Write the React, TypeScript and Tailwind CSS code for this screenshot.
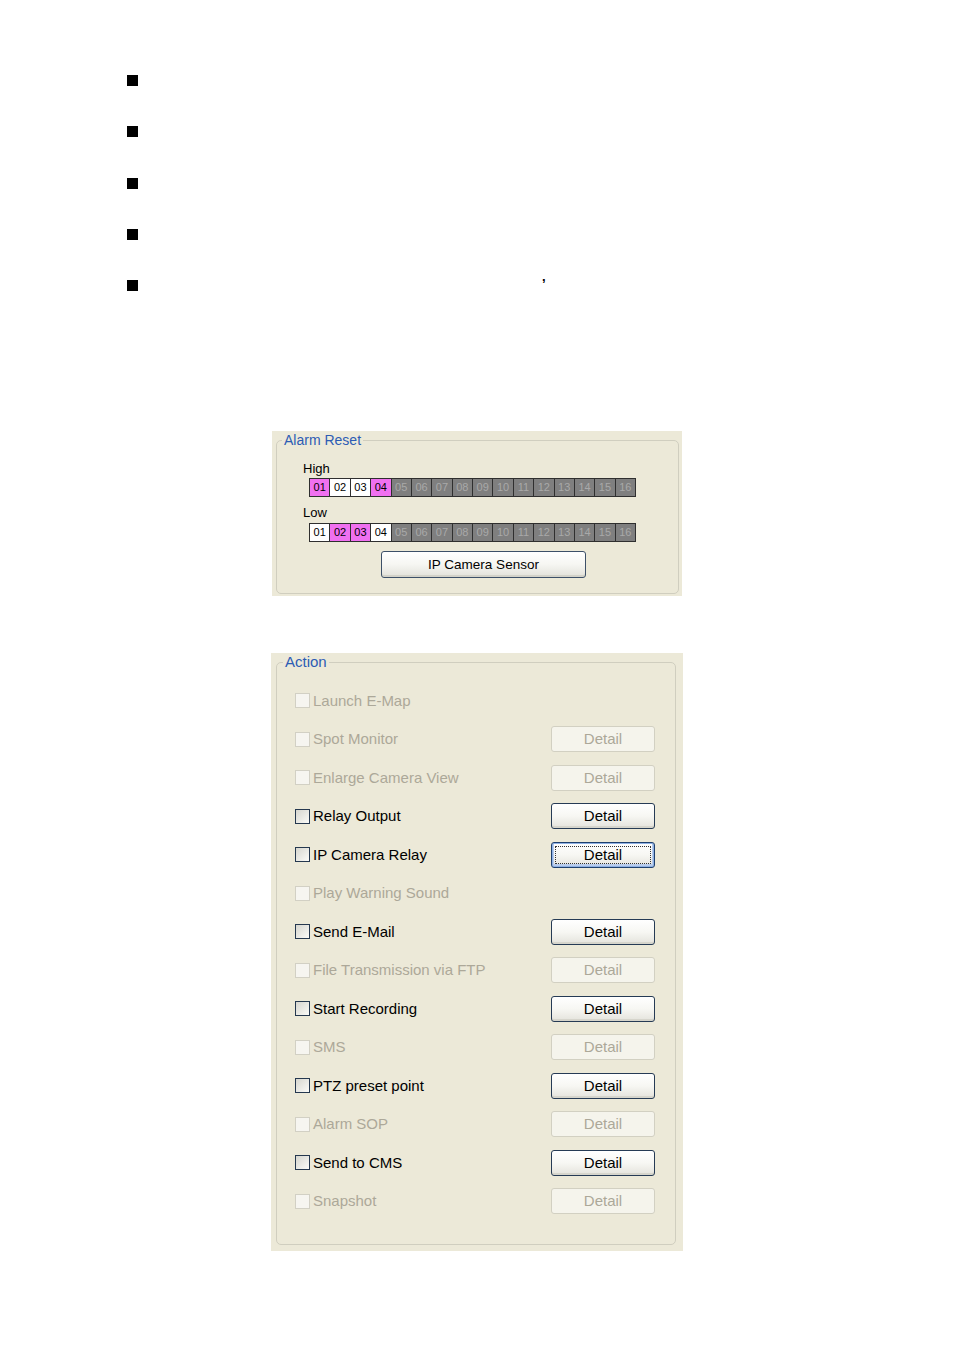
import React from 'react';

type CellState = 'on' | 'off' | 'na';

const highRow: CellState[] = ['on', 'off', 'off', 'on', ...Array(12).fill('na')];
const lowRow: CellState[] = ['off', 'on', 'on', 'off', ...Array(12).fill('na')];

interface ActionItem {
  label: string;
  enabled: boolean;
  detail: boolean;
  focused?: boolean;
}

const actions: ActionItem[] = [
  { label: 'Launch E-Map', enabled: false, detail: false },
  { label: 'Spot Monitor', enabled: false, detail: true },
  { label: 'Enlarge Camera View', enabled: false, detail: true },
  { label: 'Relay Output', enabled: true, detail: true },
  { label: 'IP Camera Relay', enabled: true, detail: true, focused: true },
  { label: 'Play Warning Sound', enabled: false, detail: false },
  { label: 'Send E-Mail', enabled: true, detail: true },
  { label: 'File Transmission via FTP', enabled: false, detail: true },
  { label: 'Start Recording', enabled: true, detail: true },
  { label: 'SMS', enabled: false, detail: true },
  { label: 'PTZ preset point', enabled: true, detail: true },
  { label: 'Alarm SOP', enabled: false, detail: true },
  { label: 'Send to CMS', enabled: true, detail: true },
  { label: 'Snapshot', enabled: false, detail: true },
];

const CellRow: React.FC<{ cells: CellState[] }> = ({ cells }) => (
  <div className="grid grid-cols-16 gap-px bg-[#2f2f2f] p-px w-[327px] h-[19px]">
    {cells.map((state, idx) => {
      const tone =
        state === 'on'
          ? 'bg-[#f070f0] text-black'
          : state === 'off'
          ? 'bg-white text-black'
          : 'bg-[#7f7f7f] text-[#a9a9a9]';
      return (
        <div key={idx} className={`${tone} flex items-center justify-center text-[11px] leading-none`}>
          {String(idx + 1).padStart(2, '0')}
        </div>
      );
    })}
  </div>
);

const Checkbox: React.FC<{ enabled: boolean }> = ({ enabled }) => (
  <span
    className={`w-[15px] h-[15px] shrink-0 border ${
      enabled
        ? 'border-[#25384f] bg-linear-to-br from-[#d6d6cf] to-[#fbfbf8]'
        : 'border-[#d2d0c4] bg-[#f6f5f0]'
    }`}
  />
);

const DetailButton: React.FC<{ enabled: boolean; focused?: boolean }> = ({ enabled, focused }) => {
  if (!enabled) {
    return (
      <button className="relative ml-auto mr-[20px] w-[104px] h-[26px] rounded-[3px] border border-[#d2d0c2] bg-[#f5f4ec] text-[#aca899] text-[15px]">
        Detail
      </button>
    );
  }
  return (
    <button
      className={`relative ml-auto mr-[20px] w-[104px] h-[26px] rounded-[3px] border bg-linear-to-b from-white via-[#f7f7f3] to-[#e4e3dc] text-black text-[15px] ${
        focused
          ? 'border-[#1e3f6d] shadow-[inset_0_0_0_1px_#8eb1e4,inset_0_-1px_0_2px_#b9cdee]'
          : 'border-[#263b55] shadow-[inset_0_-2px_0_#d6d5cc]'
      }`}
    >
      {focused && <span className="absolute inset-[3px] border border-dotted border-[#333]" />}
      Detail
    </button>
  );
};

export default function App() {
  return (
    <div className="w-[954px] min-h-[1350px] bg-white font-['Liberation_Sans',Arial,sans-serif] text-black">
      {/* Bullet list */}
      <div className="h-[431px] pt-[75px]">
        {[0, 1, 2, 3, 4].map((i) => (
          <div key={i} className="h-[51.25px] flex items-start">
            <span className="ml-[127px] w-[11px] h-[11px] bg-black" />
            {i === 4 && <span className="ml-[404px] -mt-[11px] text-[13px] leading-[16px] font-bold">,</span>}
          </div>
        ))}
      </div>

      {/* Alarm Reset */}
      <div className="ml-[272px] w-[410px] h-[165px] bg-[#ece9d8] pt-px">
        <fieldset className="ml-[4px] mr-[3px] h-[162px] border border-[#d0cebf] rounded-[5px]">
          <legend className="ml-[5px] px-[2px] text-[14px] leading-[16px] text-[#2c5cb4]">Alarm Reset</legend>
          <div className="flex flex-col text-[13px] leading-[16px]">
            <div className="mt-[13px] ml-[26px]">High</div>
            <div className="mt-px ml-[32px]">
              <CellRow cells={highRow} />
            </div>
            <div className="mt-[8px] ml-[26px]">Low</div>
            <div className="mt-[2px] ml-[32px]">
              <CellRow cells={lowRow} />
            </div>
            <button className="mt-[9px] ml-[104px] w-[205px] h-[27px] rounded-[3px] border border-[#3d5068] bg-linear-to-b from-white via-[#f6f6f2] to-[#e2e1da] shadow-[inset_0_-2px_0_#d3d2c9] text-[13.5px]">
              IP Camera Sensor
            </button>
          </div>
        </fieldset>
      </div>

      {/* Action */}
      <div className="mt-[57px] ml-[271px] w-[412px] h-[598px] bg-[#ece9d8]">
        <fieldset className="ml-[5px] mr-[7px] h-[592px] border border-[#d0cebf] rounded-[5px]">
          <legend className="ml-[6px] px-[2px] text-[15px] leading-[18px] text-[#2c5cb4]">Action</legend>
          <div className="pt-[10.5px] flex flex-col">
            {actions.map((a) => (
              <div key={a.label} className="h-[38.5px] flex items-center pl-[18px]">
                <Checkbox enabled={a.enabled} />
                <span className={`ml-[3px] text-[15px] ${a.enabled ? 'text-black' : 'text-[#aca899]'}`}>{a.label}</span>
                {a.detail && <DetailButton enabled={a.enabled} focused={a.focused} />}
              </div>
            ))}
          </div>
        </fieldset>
      </div>
    </div>
  );
}
